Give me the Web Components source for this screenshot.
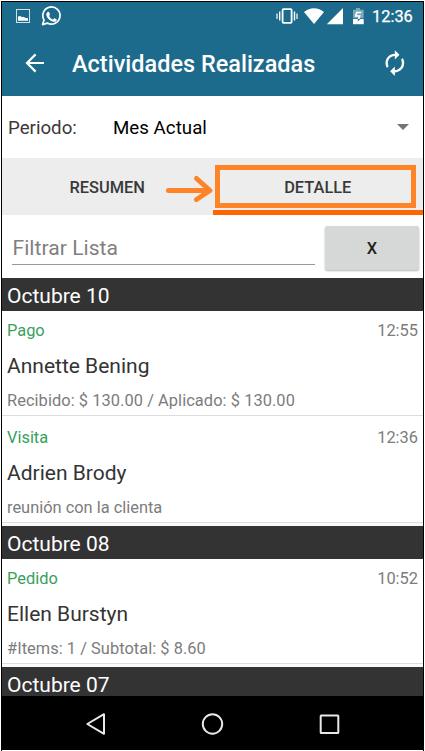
<!DOCTYPE html>
<html lang="es">
<head>
<meta charset="utf-8">
<title>Actividades Realizadas</title>
<style>
html,body{margin:0;padding:0;background:#fff}
body{width:425px;height:751px;overflow:hidden;font-family:Roboto,"Liberation Sans",sans-serif}
</style>
</head>
<body>
<activity-screen></activity-screen>
<script>
const define = (name, html) => customElements.define(name, class extends HTMLElement {
  constructor() {
    super();
    const t = document.createElement('template');
    t.innerHTML = html;
    this.attachShadow({mode: 'open'}).append(t.content.cloneNode(true));
  }
});

define('status-bar', `<style>
:host{display:flex;height:28px;box-sizing:border-box;color:#fff;justify-content:space-between}
svg{display:block}
.r{display:flex}
.time{font-size:16.4px;font-weight:400;-webkit-text-stroke:.25px #fff;line-height:30px;width:51px}
</style>
<svg width="70" height="28" viewBox="2 2 70 28" fill="none" stroke="#fff">
<rect x="16.500" y="9.500" width="13" height="13" stroke-width="1" opacity=".8"/>
<path d="M18 20.800v-4.200l2.300-.6 1.700 1.300 1.500-.5 1.500.9 3 .6v2.500z" fill="#fff" stroke="none"/>
<path d="M42.600 24.600l1.400-4.700a8.600 8.600 0 1 1 3.300 3.200z" stroke-width="1.700" stroke-linejoin="round"/>
<path d="M47.300 12.200c.5-.6 1.400-.7 1.800.1l.8 1.900c.1.500-.8 1.400-.8 1.700.9 1.700 2.100 2.800 3.800 3.500.5.100 1.100-1.300 1.600-1.100l2 .9c.7.400 0 1.700-.7 2.200-1.300.9-3.400.4-5.500-.9-2.300-1.500-3.900-3.800-4-5.900 0-1 .5-1.900 1-2.400z" fill="#fff" stroke="none"/>
</svg>
<div class="r"><svg width="98" height="28" viewBox="274 2 98 28">
<g fill="none" stroke="#fff"><rect x="282.600" y="9.200" width="9" height="13.600" rx=".8" stroke-width="1.800"/><path d="M279.700 11.500v9M294.500 11.500v9" stroke-width="1.400"/><path d="M277 13.500v5.500M297 13.500v5.500" stroke-width="1.200"/></g>
<path d="M304 12.100c5.600-5.100 14.400-5.100 20 0l-10 12zM343 8v16.200H326.800z" fill="#fff"/>
<path d="M353 9.800h3v-1.900h4v1.900h3.700v8.500H353z" fill="#fff" opacity=".42"/><path d="M353 19h10.700v5.200H353z" fill="#fff"/>
<path d="M361.300 12.500h-4.600l-1 3.500h4l-1.200 3.500" fill="none" stroke="#fff" stroke-width="1.600"/><path d="M360.500 19l-3 2.500.500-2.500z" fill="#1d6b8c"/>
</svg><span class="time">12:36</span></div>`);

define('app-bar', `<style>
:host{display:flex;height:65.500px;color:#fff;align-items:center}
h1{margin:0;padding-left:22px;font-size:23.450px;font-weight:500;line-height:28px;flex:1;padding-top:3px;white-space:nowrap;letter-spacing:.02px}
svg{display:block}
</style>
<svg width="48" height="65" viewBox="2 30 48 65" fill="none" stroke="#fff" stroke-width="2.200"><path d="M44 63H27.300M35.600 54.400L27 63l8.600 8.600"/></svg>
<h1><slot></slot></h1>
<svg width="42" height="65" viewBox="381 30 42 65"><g transform="translate(380.800 49) scale(1.170)" fill="#fff"><path d="M12 6v3l4-4-4-4v3c-4.420 0-8 3.580-8 8 0 1.570.46 3.030 1.240 4.260L6.700 14.800c-.45-.83-.7-1.790-.7-2.800 0-3.310 2.690-6 6-6zm6.760 1.740L17.300 9.200c.44.840.7 1.790.7 2.800 0 3.310-2.690 6-6 6v-3l-4 4 4 4v-3c4.420 0 8-3.580 8-8 0-1.570-.46-3.030-1.240-4.260z"/></g></svg>`);

define('period-picker', `<style>
:host{display:flex;height:62px;align-items:center;background:#fff;font-size:18.700px;line-height:24px;color:#393939;padding-left:6px;box-sizing:border-box}
.l{width:105px;padding-top:1.500px}.v{flex:1;color:#000;padding-top:1.500px;letter-spacing:.03px}
svg{display:block;margin-right:14px}
</style><span class="l">Periodo:</span><span class="v"><slot></slot></span>
<svg width="12" height="6" viewBox="0 0 12 6"><path d="M0 0h12L6 6z" fill="#747474"/></svg>`);

define('tab-strip', `<style>
:host{display:grid;grid-template-columns:1fr 1fr;height:56.500px;background:#ededed;position:relative;color:#393939;font-size:16.400px;font-weight:500}
span{display:flex;align-items:center;justify-content:center;box-sizing:border-box;padding-top:2px}
.on{border-bottom:5px solid #ff6600;padding-top:7px}
.box{position:absolute;left:213px;top:7px;width:201px;height:43px;border:5px solid #ff8427;box-sizing:border-box}
svg{position:absolute;left:162px;top:15px}
</style><span>RESUMEN</span><span class="on">DETALLE</span>
<div class="box"></div>
<svg width="52" height="32" viewBox="164 173 52 32" fill="none" stroke="#ff8427" stroke-width="5" stroke-linecap="round" stroke-linejoin="round"><path d="M168.500 190.500H209M196.500 178.500L210 190.500 196.500 199.500"/></svg>`);

define('filter-bar', `<style>
:host{display:flex;height:63.500px;background:#fff;box-sizing:border-box;padding:11.500px 4px 0 10px;justify-content:space-between}
.f{width:303px;height:38.500px;border-bottom:1.500px solid #999;box-sizing:border-box;font-size:21.100px;line-height:43px;color:#808080;padding-left:.5px;letter-spacing:.03px}
.b{width:94px;height:43.500px;border-radius:2.500px;background:#d6d8d7;box-shadow:0 1px 2px rgba(0,0,0,.3);font-size:16.400px;font-weight:500;color:#202020;display:flex;align-items:center;justify-content:center;line-height:20px;padding-top:1.500px;box-sizing:border-box}
</style><div class="f">Filtrar Lista</div><div class="b">X</div>`);

define('date-header', `<style>
:host{display:block;height:33px;background:#333;color:#fff;font-size:21px;line-height:36px;padding-left:5px;box-sizing:border-box;overflow:hidden;white-space:nowrap}
</style><slot></slot>`);

define('activity-item', `<style>
:host{display:block;height:107.200px;box-sizing:border-box;background:#fff;border-bottom:1px solid #ddd;padding:10px 5px 0;color:#7c7c7c;font-size:16.400px;line-height:20px;white-space:nowrap}
.top{display:flex;justify-content:space-between}.k{color:#38a05c}
.n{font-size:21px;line-height:28px;color:#333;margin-top:11px}.d{margin-top:11px;letter-spacing:var(--detail-tracking,0)}
</style><div class="top"><span class="k"><slot name="kind"></slot></span><slot name="time"></slot></div>
<div class="n"><slot name="name"></slot></div><div class="d"><slot></slot></div>`);

define('nav-bar', `<style>
:host{display:block;height:54px;background:#000}svg{display:block}
</style><svg width="421" height="54" viewBox="2 696 421 54" fill="none" stroke="#e8e8e8" stroke-width="2"><path d="M104 714.200v19.600L87.300 724z" stroke-linejoin="round"/><circle cx="212.500" cy="724" r="9.700"/><rect x="320.700" y="715.400" width="17.600" height="17.600" rx=".5"/></svg>`);

define('activity-screen', `<style>
:host{display:flex;flex-direction:column;box-sizing:border-box;width:423px;height:750px;margin:1px 1px 0;border:1px solid #000;border-bottom:0;overflow:hidden;background:#fff}
.head{background:#1d6b8c;height:94px;flex:none}
.list{height:418px;overflow:hidden;flex:none}
.last{height:104.800px;--detail-tracking:.04px}.gap{height:3px;background:#fafafa}
.pago{height:105px;--detail-tracking:.065px}
.visita{padding-top:12px}
period-picker,tab-strip,filter-bar,nav-bar{flex:none}
</style>
<div class="head"><status-bar></status-bar><app-bar>Actividades Realizadas</app-bar></div>
<period-picker>Mes Actual</period-picker>
<tab-strip></tab-strip>
<filter-bar></filter-bar>
<div class="list">
<date-header>Octubre 10</date-header>
<activity-item class="pago"><span slot="kind">Pago</span><span slot="time">12:55</span><span slot="name">Annette Bening</span>Recibido: $ 130.00 / Aplicado: $ 130.00</activity-item>
<activity-item class="visita"><span slot="kind">Visita</span><span slot="time">12:36</span><span slot="name">Adrien Brody</span>reunión con la clienta</activity-item>
<div class="gap"></div>
<date-header>Octubre 08</date-header>
<activity-item class="last"><span slot="kind">Pedido</span><span slot="time">10:52</span><span slot="name">Ellen Burstyn</span>#Items: 1 / Subtotal: $ 8.60</activity-item>
<div class="gap"></div>
<date-header>Octubre 07</date-header>
</div>
<nav-bar></nav-bar>`);
</script>
</body>
</html>
